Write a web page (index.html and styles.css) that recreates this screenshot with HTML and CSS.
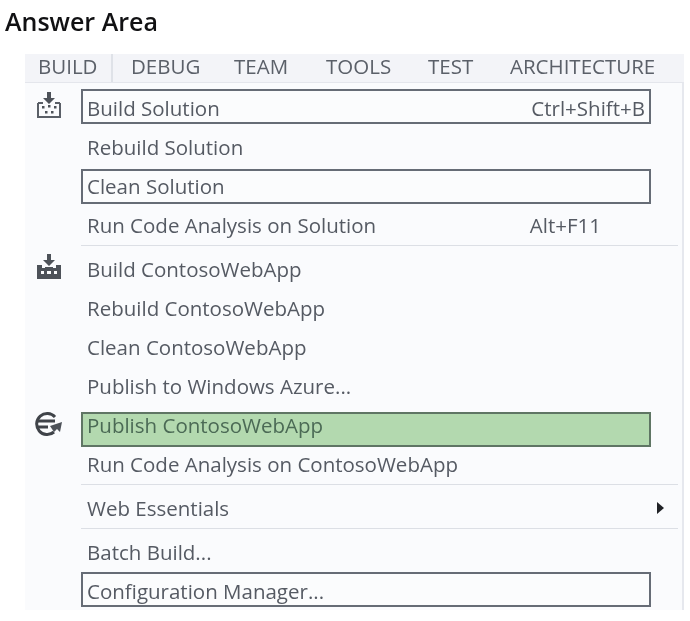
FILE: index.html
```html
<!DOCTYPE html>
<html lang="en">
<head>
<meta charset="utf-8">
<title>Answer Area</title>
<link rel="stylesheet" href="styles.css">
</head>
<body>
<h1 class="title">Answer Area</h1>
<div class="panel">
  <nav class="tabs">
    <span class="tab tab-active">BUILD</span>
    <span class="tab">DEBUG</span>
    <span class="tab">TEAM</span>
    <span class="tab">TOOLS</span>
    <span class="tab">TEST</span>
    <span class="tab">ARCHITECTURE</span>
  </nav>
  <div class="menu">
    <div class="row row-build">
      <span class="icon"><svg width="28" height="28" viewBox="0 0 28 28"><path class="ico-fill" d="M12 1h4v6h4l-6 6-6-6h4z"/><path class="ico-line" d="M3 12v14h22V12M3 12h5M20 12h5"/><g class="ico-fill"><rect x="7" y="15" width="2.5" height="2.5"/><rect x="13" y="14" width="2.5" height="2.5"/><rect x="19" y="15" width="2.5" height="2.5"/><rect x="10" y="20" width="2.5" height="2.5"/><rect x="16" y="20" width="2.5" height="2.5"/></g></svg></span>
      <div class="item framed"><span>Build Solution</span><span class="key">Ctrl+Shift+B</span></div>
    </div>
    <div class="row"><span class="icon"></span><div class="item"><span>Rebuild Solution</span></div></div>
    <div class="row row-clean"><span class="icon"></span><div class="item framed"><span>Clean Solution</span></div></div>
    <div class="row"><span class="icon"></span><div class="item"><span>Run Code Analysis on Solution</span><span class="key key-alt">Alt+F11</span></div></div>
    <hr class="sep">
    <div class="row row-contoso">
      <span class="icon"><svg width="28" height="28" viewBox="0 0 28 28"><path class="ico-fill" d="M12 1h4v6h4l-6 6-6-6h4z"/><path class="ico-fill" fill-rule="evenodd" d="M2 12h5v3h3v-1h8v1h3v-3h5v14H2zM6 18v3h3v-3zM12 18v3h4v-3zM19 18v3h3v-3z"/></svg></span>
      <div class="item"><span>Build ContosoWebApp</span></div>
    </div>
    <div class="row"><span class="icon"></span><div class="item"><span>Rebuild ContosoWebApp</span></div></div>
    <div class="row"><span class="icon"></span><div class="item"><span>Clean ContosoWebApp</span></div></div>
    <div class="row"><span class="icon"></span><div class="item"><span>Publish to Windows Azure...</span></div></div>
    <div class="row row-publish">
      <span class="icon icon-publish"><svg width="28" height="26" viewBox="0 0 28 26"><path class="ico-ring" d="M20 6A10.5 10.5 0 1 0 19 21"/><path class="ico-ring" d="M3 10h17M3 16h10"/><path class="ico-fill" d="M15 15l12-4-2 10-3-3-3 3z"/></svg></span>
      <div class="item framed highlight"><span>Publish ContosoWebApp</span></div>
    </div>
    <div class="row"><span class="icon"></span><div class="item"><span>Run Code Analysis on ContosoWebApp</span></div></div>
    <hr class="sep">
    <div class="row"><span class="icon"></span><div class="item"><span>Web Essentials</span></div><span class="arrow"></span></div>
    <hr class="sep">
    <div class="row"><span class="icon"></span><div class="item"><span>Batch Build...</span></div></div>
    <div class="row row-config"><span class="icon"></span><div class="item framed"><span>Configuration Manager...</span></div></div>
  </div>
</div>
</body>
</html>
```
FILE: styles.css
```css
html, body {
  margin: 0;
  padding: 0;
  background: #ffffff;
}
body {
  width: 690px;
  height: 621px;
  overflow: hidden;
  font-family: "Open Sans", "Noto Sans", sans-serif;
}
.title {
  margin: 0;
  padding: 7px 0 0 5px;
  height: 54px;
  box-sizing: border-box;
  font-size: 25px;
  line-height: 29px;
  font-weight: 600;
  color: #111113;
  filter: blur(0.35px);
}
.panel {
  margin-left: 25px;
  width: 659px;
  height: 556px;
  background: #f3f4f8;
  color: #555a63;
  font-size: 20.5px;
  filter: blur(0.4px);
}
.tabs {
  display: grid;
  grid-template-columns: 88px 103px 92px 102px 82px auto;
  height: 28px;
  align-items: start;
}
.tab {
  padding: 0 0 4px 18px;
  line-height: 24px;
  font-size: 20.5px;
  color: #5b6069;
  white-space: nowrap;
}
.tab-active {
  padding-left: 13px;
  border-right: 2px solid #dfe2e8;
}
.menu {
  height: 528px;
  box-sizing: border-box;
  padding-top: 6px;
  background: #fafbfd;
  border-right: 2px solid #e6e8ee;
  border-top: 1px solid #e4e6ec;
}
.row {
  display: flex;
  height: 39px;
  align-items: flex-start;
}
.icon {
  flex: 0 0 56px;
  height: 31px;
  display: flex;
  justify-content: flex-start;
  align-items: center;
  padding-left: 10px;
  box-sizing: border-box;
}
.item {
  flex: 0 0 570px;
  box-sizing: border-box;
  height: 35px;
  padding: 2px 4px 0 4px;
  border: 2px solid transparent;
  display: flex;
  justify-content: space-between;
  align-items: center;
  line-height: 30px;
  white-space: nowrap;
}
.framed {
  border-color: #666c76;
  background: #fbfcfd;
}
.highlight {
  background: #b3d9af;
  border-color: #5f7564;
  padding: 0 4px 10px 4px;
  color: #4b6a55;
}
.row-clean { height: 37px; padding-top: 2px; }
.row-clean .item { padding: 0 4px 1px 4px; }
.row-contoso .icon { height: 33px; }
.row-publish { height: 33px; padding-top: 6px; }
.row-publish .icon { height: 24px; }
.row-config { height: 35px; }
.key-alt {
  margin-right: 44px;
}
.sep {
  margin: 0 4px 4px 56px;
  height: 0;
  border: 0;
  border-top: 1px solid #dcdfe5;
}
.arrow {
  width: 0;
  height: 0;
  margin: 13px 0 0 6px;
  border-left: 7px solid #202226;
  border-top: 6px solid transparent;
  border-bottom: 6px solid transparent;
}
.ico-fill { fill: #4d5259; }
.ico-line { fill: none; stroke: #5a5f67; stroke-width: 2; }
.ico-ring { fill: none; stroke: #3f4349; stroke-width: 3; }
```
